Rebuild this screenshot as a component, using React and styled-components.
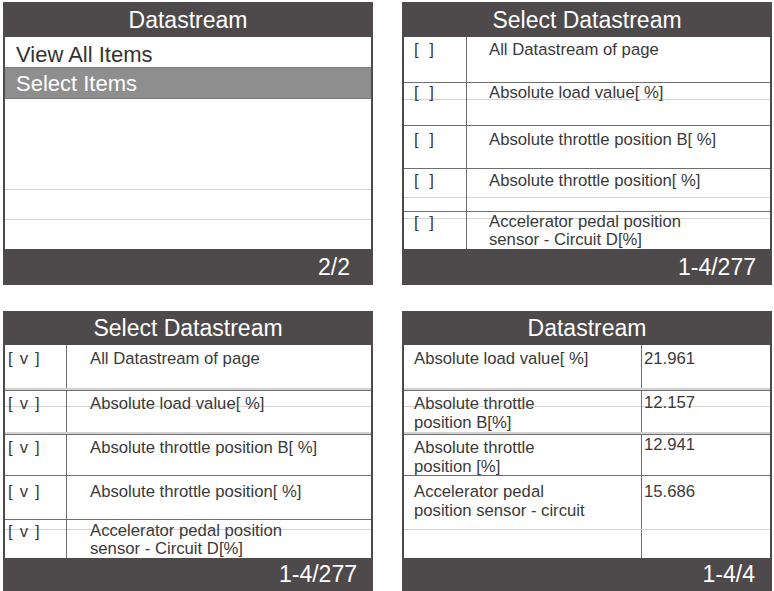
import React from "react";
import styled, { createGlobalStyle } from "styled-components";

const Global = createGlobalStyle`
  html, body { margin: 0; padding: 0; background: #ffffff; }
  body { font-family: "Liberation Sans", Arial, Helvetica, sans-serif; }
`;

const DARK = "#4e4a4b";
const LINE = "#6f6d6e";
const LIGHT = "#d2d2d2";
const TEXT = "#3a3a3a";

const Page = styled.div`
  display: grid;
  grid-template-columns: 370px 370px;
  column-gap: 29px;
  row-gap: 26px;
  padding: 2px 0 0 3px;
  width: 774px;
  height: 591px;
  box-sizing: border-box;
`;

const Panel = styled.section`
  display: flex;
  flex-direction: column;
  width: 370px;
  background: ${DARK};
  padding: 0 2px;
  box-sizing: border-box;
`;

const Header = styled.div`
  height: ${(p) => p.$h}px;
  display: flex;
  align-items: center;
  justify-content: center;
  color: #ffffff;
  font-size: 23px;
  padding-top: 1px;
  box-sizing: border-box;
`;

const Footer = styled.div`
  height: ${(p) => p.$h}px;
  display: flex;
  align-items: center;
  justify-content: flex-end;
  padding: 2px ${(p) => p.$pr}px 0 0;
  color: #ffffff;
  font-size: 23px;
  box-sizing: border-box;
`;

const Body = styled.div`
  height: ${(p) => p.$h}px;
  background: #ffffff;
  display: flex;
  flex-direction: column;
`;

const MenuRow = styled.div`
  height: ${(p) => p.$h}px;
  box-sizing: border-box;
  display: flex;
  align-items: center;
  padding: ${(p) => p.$pt || 0}px 0 0 11px;
  font-size: 22px;
  color: ${(p) => (p.$active ? "#ffffff" : "#333333")};
  background: ${(p) => (p.$active ? "#8f8e8e" : "#ffffff")};
  border-top: ${(p) => (p.$border ? `1px solid ${p.$border}` : "none")};
  border-bottom: ${(p) => (p.$active ? "1px solid #7d7c7c" : "none")};
`;

const Row = styled.div`
  display: grid;
  grid-template-columns: ${(p) => p.$cols};
  height: ${(p) => p.$h}px;
  box-sizing: border-box;
  border-top: ${(p) => (p.$first ? "none" : `${p.$light ? 1 : 1.5}px solid ${p.$light ? LIGHT : LINE}`)};
  box-shadow: ${(p) => (p.$double ? `0 -2px 0 ${LIGHT}` : "none")};
  background-color: #ffffff;
  background-image: ${(p) =>
    p.$strike != null
      ? `linear-gradient(to bottom, transparent ${p.$strike}px, ${LIGHT} ${p.$strike}px, ${LIGHT} ${p.$strike + 1}px, transparent ${p.$strike + 1}px)`
      : "none"};
`;

const Cell = styled.div`
  padding: ${(p) => p.$pt || 0}px 0 0 ${(p) => p.$pl || 0}px;
  font-size: 16.7px;
  line-height: ${(p) => p.$lh || 19}px;
  color: ${TEXT};
  border-right: ${(p) => (p.$divider ? `1.5px solid ${LINE}` : "none")};
  letter-spacing: ${(p) => p.$ls || 0}px;
  white-space: pre;
  overflow: visible;
  min-height: 0;
`;

function MenuPanel() {
  return (
    <Panel>
      <Header $h={35}>Datastream</Header>
      <Body $h={212}>
        <MenuRow $h={30} $pt={5}>View All Items</MenuRow>
        <MenuRow $h={32} $pt={2} $active $border="#7f7e7e">Select Items</MenuRow>
        <MenuRow $h={90} />
        <MenuRow $h={30} $border={LIGHT} />
        <MenuRow $h={30} $border={LIGHT} />
      </Body>
      <Footer $h={34} $pr={21}>2/2</Footer>
    </Panel>
  );
}

const selectRowsTop = [
  { h: 45, pt: 3, text: "All Datastream of page" },
  { h: 43, pt: 0, text: "Absolute load value[ %]", strike: 16 },
  { h: 43, pt: 4, text: "Absolute throttle position B[ %]" },
  { h: 43, pt: 2, text: "Absolute throttle position[ %]", strike: 28 },
  { h: 38, pt: 1, lh: 18, text: "Accelerator pedal position\nsensor - Circuit D[%]", strike: 6 },
];

const selectRowsBottom = [
  { h: 45, pt: 4, text: "All Datastream of page" },
  { h: 44, pt: 3, text: "Absolute load value[ %]", strike: 15, double: true },
  { h: 41, pt: 3, text: "Absolute throttle position B[ %]", double: true },
  { h: 44, pt: 6, text: "Absolute throttle position[ %]" },
  { h: 39, pt: 2, lh: 18, text: "Accelerator pedal position\nsensor - Circuit D[%]", strike: 9 },
];

function SelectPanel({ rows, mark, headerH, bodyH, footerH, leftW, markPl, markLs, textPl }) {
  return (
    <Panel>
      <Header $h={headerH}>Select Datastream</Header>
      <Body $h={bodyH}>
        {rows.map((r, i) => (
          <Row key={i} $cols={`${leftW}px 1fr`} $h={r.h} $first={i === 0} $strike={r.strike} $double={r.double}>
            <Cell $divider $pt={r.pt} $pl={markPl} $ls={markLs}>{mark}</Cell>
            <Cell $pt={r.pt} $pl={textPl} $lh={r.lh}>{r.text}</Cell>
          </Row>
        ))}
      </Body>
      <Footer $h={footerH} $pr={14}>1-4/277</Footer>
    </Panel>
  );
}

const dataRows = [
  { h: 45, pt: 4, vpt: 4, label: "Absolute load value[ %]", value: "21.961" },
  { h: 44, pt: 3, vpt: 2, label: "Absolute throttle\nposition B[%]", value: "12.157", strike: 15, double: true },
  { h: 41, pt: 3, vpt: 0, label: "Absolute throttle\nposition [%]", value: "12.941", double: true },
  { h: 54, pt: 6, vpt: 6, label: "Accelerator pedal\nposition sensor - circuit", value: "15.686" },
  { h: 29, pt: 0, vpt: 0, label: "", value: "", light: true },
];

function DataPanel() {
  return (
    <Panel>
      <Header $h={34}>Datastream</Header>
      <Body $h={213}>
        {dataRows.map((r, i) => (
          <Row key={i} $cols="238px 1fr" $h={r.h} $first={i === 0} $strike={r.strike} $double={r.double} $light={r.light}>
            <Cell $divider $pt={r.pt} $pl={10}>{r.label}</Cell>
            <Cell $pt={r.vpt} $pl={2}>{r.value}</Cell>
          </Row>
        ))}
      </Body>
      <Footer $h={32} $pr={15}>1-4/4</Footer>
    </Panel>
  );
}

export default function App() {
  return (
    <>
      <Global />
      <Page>
        <MenuPanel />
        <SelectPanel
          rows={selectRowsTop}
          mark="[ ]"
          headerH={35}
          bodyH={212}
          footerH={34}
          leftW={63}
          markPl={10}
          markLs={3}
          textPl={22}
        />
        <SelectPanel
          rows={selectRowsBottom}
          mark="[ v ]"
          headerH={34}
          bodyH={213}
          footerH={32}
          leftW={62}
          markPl={3}
          markLs={1.2}
          textPl={23}
        />
        <DataPanel />
      </Page>
    </>
  );
}
